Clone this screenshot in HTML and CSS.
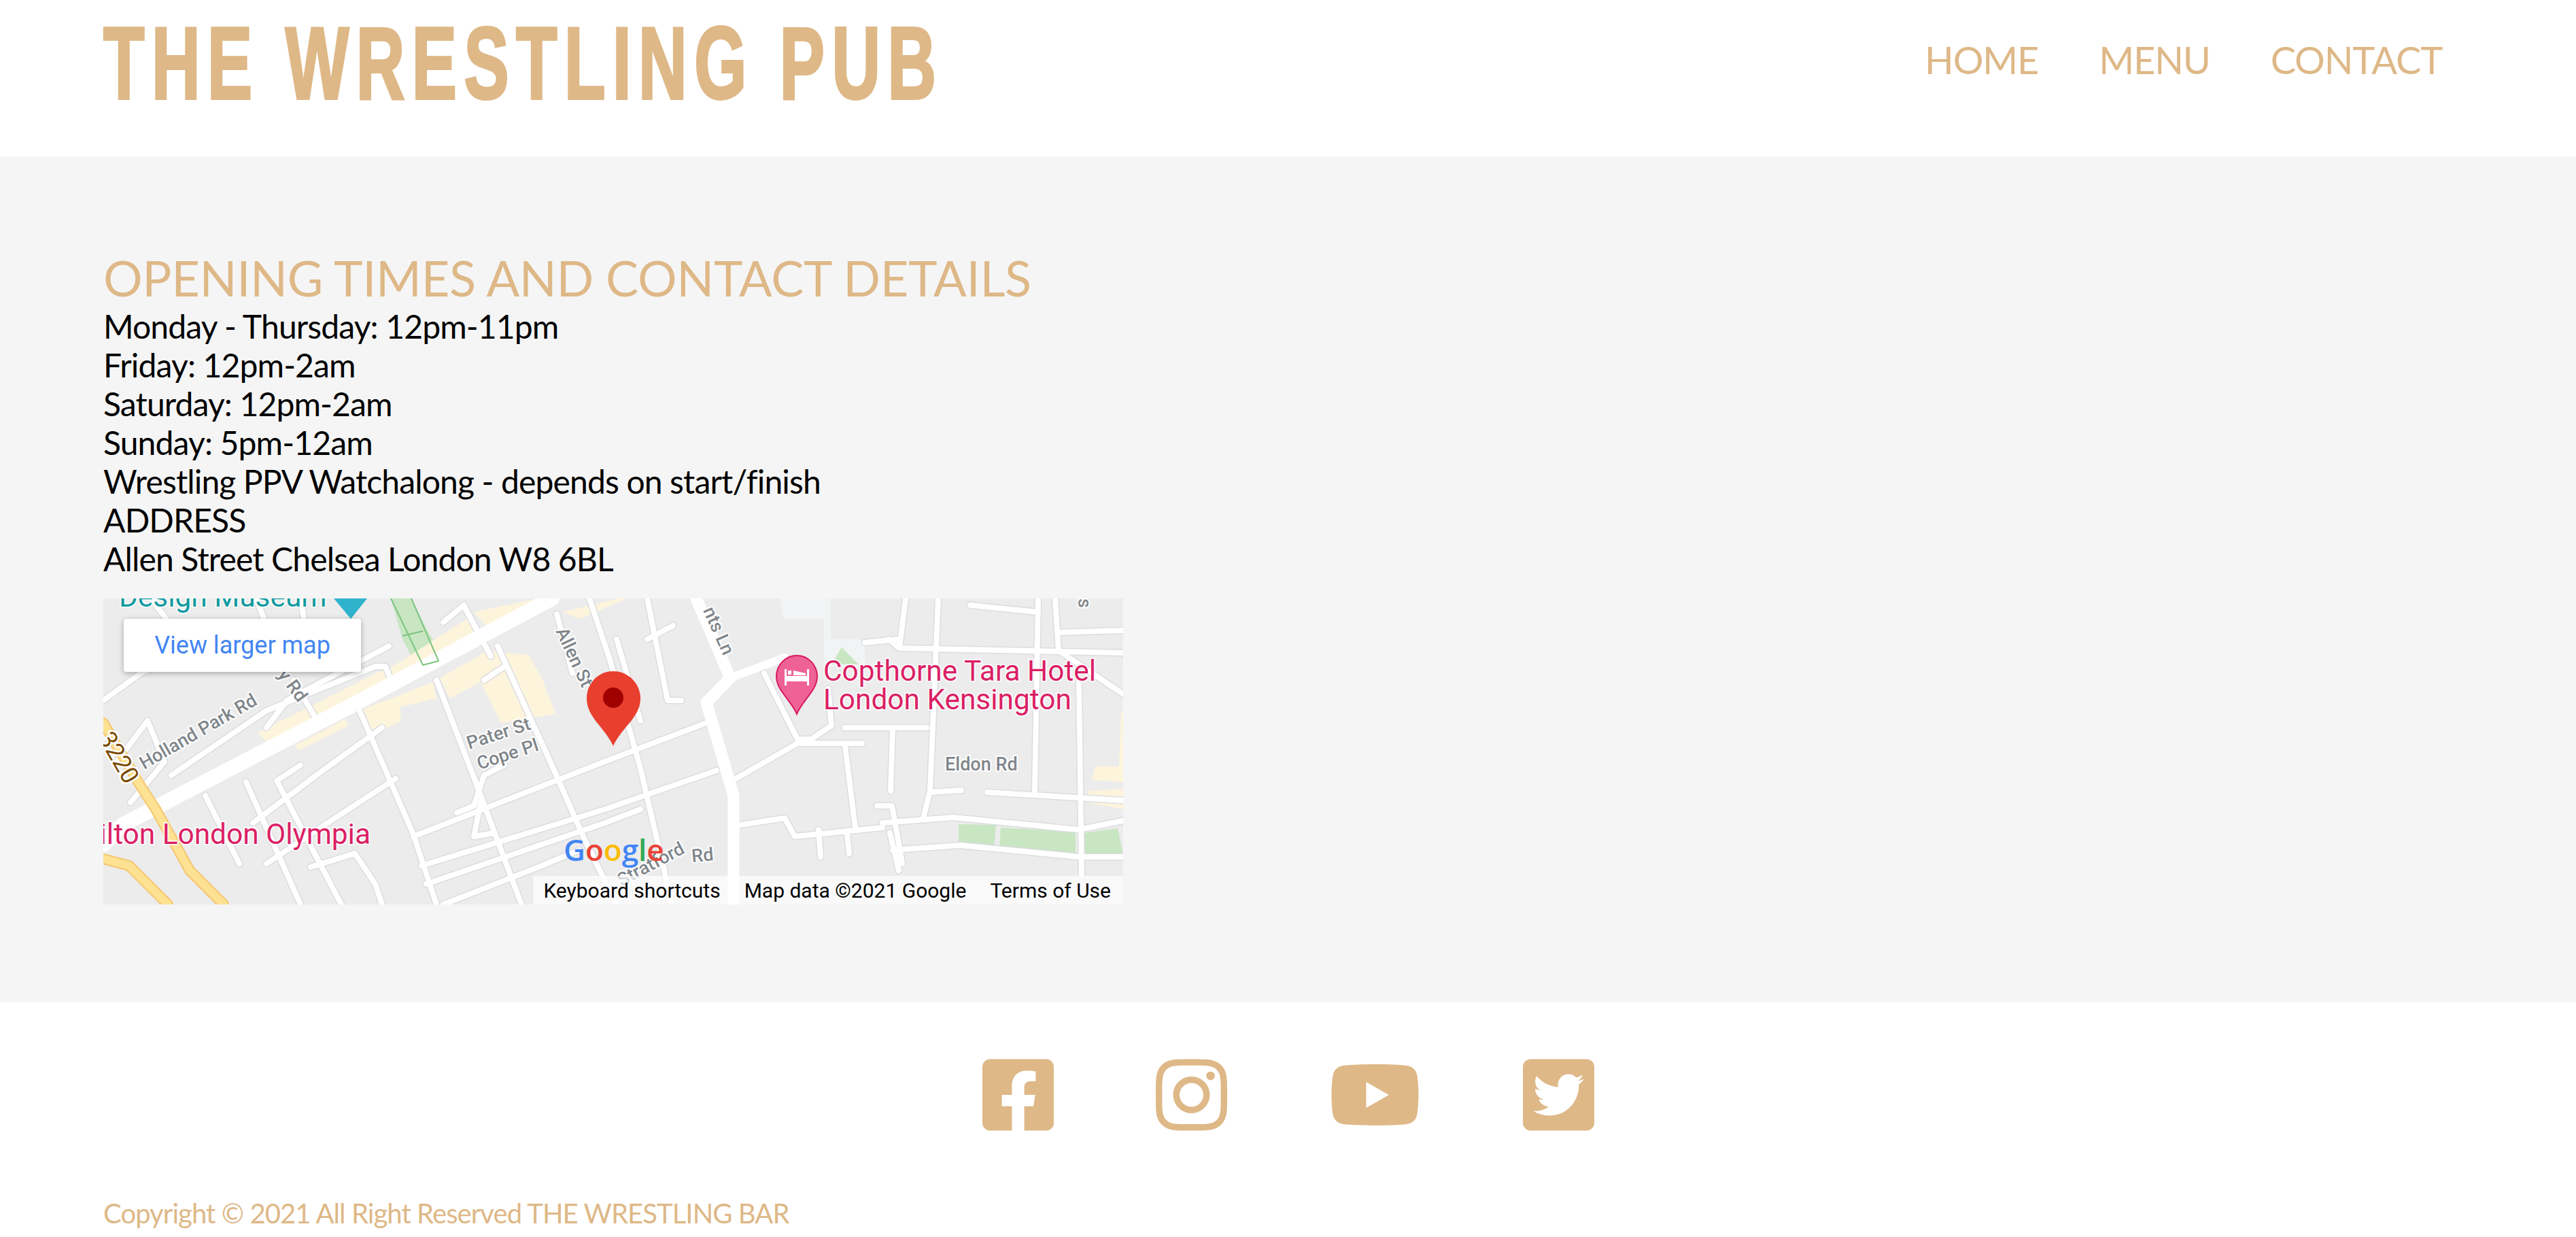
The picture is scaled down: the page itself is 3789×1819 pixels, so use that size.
FILE: index.html
```html
<!doctype html>
<html>
  <head>
    <meta charset="UTF-8" />
    <title>The Wrestling Pub</title>
    <link rel="stylesheet" href="styles.css">
  </head>
  <body>
    <header class="site-header">
      <h1 class="logo">THE WRESTLING PUB</h1>
      <nav class="main-nav">
        <a href="#">HOME</a>
        <a href="#">MENU</a>
        <a href="#">CONTACT</a>
      </nav>
    </header>

    <main class="contact">
      <h2>OPENING TIMES AND CONTACT DETAILS</h2>
      <p>Monday - Thursday: 12pm-11pm</p>
      <p>Friday: 12pm-2am</p>
      <p>Saturday: 12pm-2am</p>
      <p>Sunday: 5pm-12am</p>
      <p>Wrestling PPV Watchalong - depends on start/finish</p>
      <p>ADDRESS</p>
      <p>Allen Street Chelsea London W8 6BL</p>

      <div class="map">
        <svg class="map-canvas" viewBox="0 0 1500 450" width="1500" height="450">
          <defs>
            <g id="minor-roads">
              <path d="M376 163L456 347L490 450" />
              <path d="M490 120L545 263L615 450" />
              <path d="M580 70L665 257L709 357L755 450" />
              <path d="M667 23L690 110" />
              <path d="M715 0L745 90L790 250L825 400L835 450" />
              <path d="M800 0L830 150L850 150" />
              <path d="M800 60L838 40" />
              <path d="M755 60L790 180" />
              <path d="M456 350L745 237L887 183" />
              <path d="M468 393L738 310L902 253" />
              <path d="M475 420L738 330L790 310" />
              <path d="M500 450L640 395L700 370" />
              <path d="M520 315L545 305L560 260L590 245" />
              <path d="M575 345L545 350L555 300" />
              <path d="M560 120L590 100" />
              <path d="M220 330L320 255L410 190" />
              <path d="M240 390L330 330L430 265" />
              <path d="M210 270L290 450" />
              <path d="M150 290L200 390" />
              <path d="M290 245L255 268L350 450" />
              <path d="M305 395L370 375L400 420L410 450" />
              <path d="M0 150L55 110L100 90" />
              <path d="M20 240L65 180L90 240L40 300" />
              <path d="M100 260L240 165L400 100L415 100L425 125" />
              <path d="M240 190L270 150L420 70" />
              <path d="M280 120L320 190" />
              <path d="M70 0L100 40M225 0L240 40M290 0L295 30" />
              <path d="M500 35L530 10M530 10L570 85" />
              <path d="M927 267L1021 213L1116 213" />
              <path d="M1091 217L1106 337" />
              <path d="M972 110L1021 207L1041 207L1071 187L1066 133" />
              <path d="M1091 190L1211 190" />
              <path d="M1161 193L1158 283" />
              <path d="M1171 73L1499 80" />
              <path d="M1155 60L1171 73L1180 0" />
              <path d="M1120 65L1170 60" />
              <path d="M1228 0L1216 283L1206 323" />
              <path d="M1375 0L1370 283" />
              <path d="M1435 123L1439 407" />
              <path d="M1405 50L1499 47" />
              <path d="M1400 0L1405 77" />
              <path d="M1410 80L1499 140" />
              <path d="M1300 285L1499 297" />
              <path d="M1146 330L1250 322L1435 340L1499 327" />
              <path d="M1161 370L1260 363L1435 380L1499 380" />
              <path d="M937 333L1002 323L1017 350L1146 337" />
              <path d="M1138 305L1160 305L1170 360L1175 390" />
              <path d="M1275 10L1375 20" />
              <path d="M1216 285L1262 282" />
              <path d="M1052 340L1055 380M1094 345L1097 375" />
              <path d="M1157 345L1170 400" />
            </g>
          </defs>

          <rect class="land" width="1500" height="450" />
          <path class="building" d="M995 0H1070V60H1120V100H1060V30H1000Z" />
          <path class="park" d="M1086 72L1111 97H1071Z" />
          <path class="park" d="M423 0H453L478 50L485 60L455 88L440 60Z" />
          <path class="park" d="M1258 332L1313 333L1310 365L1258 358Z" />
          <path class="park" d="M1320 337L1430 343L1430 377L1318 367Z" />
          <path class="park" d="M1442 345L1492 338L1500 377L1442 377Z" />

          <path class="shop" d="M227 197L416 103L423 120L242 213Z" />
          <path class="shop" d="M421 103L540 27L555 50L426 120Z" />
          <path class="shop" d="M545 20L640 0L655 0L565 43Z" />
          <path class="shop" d="M381 163L485 123L490 147L436 160L438 180L396 200Z" />
          <path class="shop" d="M495 117L565 77L625 83L645 117L665 170L585 183L555 123L510 147Z" />
          <path class="shop" d="M281 217L356 177L361 187L289 223Z" />
          <path class="shop" d="M675 20L758 0L770 0L700 30Z" />
          <path class="shop" d="M1459 247L1494 247L1497 167L1500 163V270L1454 267Z" />
          <path class="shop" d="M1449 283L1500 280V310L1449 300Z" />

          <use href="#minor-roads" class="road-edge" />
          <use href="#minor-roads" class="road" />

          <path class="road-main" d="M0 362L28 333L366 157L660 0" />
          <path class="road-mid" d="M872 0L922 117L887 153L927 290V450" />
          <path class="road-mid road-mid-thin" d="M922 117L1002 87" />

          <path class="rail" d="M423 0L470 98L493 92L453 0M440 55L470 48" />

          <path class="highway-edge" d="M0 183L53 273L77 310L127 400L177 450" />
          <path class="highway" d="M0 183L53 273L77 310L127 400L177 450" />
          <path class="highway-edge" d="M0 383L38 393L95 450" />
          <path class="highway" d="M0 383L38 393L95 450" />

          <path class="pin-teal" d="M339 0H388L364 30Z" />

          <text class="label" transform="translate(60 252) rotate(-30)">Holland Park Rd</text>
          <text class="label" transform="translate(256 112) rotate(54)">y Rd</text>
          <text class="label" transform="translate(538 222) rotate(-18)">Pater St</text>
          <text class="label" transform="translate(553 252) rotate(-18)">Cope Pl</text>
          <text class="label" transform="translate(665 48) rotate(65)">Allen St</text>
          <text class="label label-end" transform="translate(912 85) rotate(66)">nts Ln</text>
          <text class="label" x="1238" y="253">Eldon Rd</text>
          <text class="label" transform="translate(762 424) rotate(-28)">Stratford</text>
          <text class="label" transform="translate(866 388) rotate(-5)">Rd</text>
          <text class="label" transform="translate(1434 0) rotate(90)">s</text>
          <text class="label-road" transform="translate(-8 205) rotate(60)">3220</text>

          <text class="poi poi-teal" x="23" y="12">Design Museum</text>
          <text class="poi poi-pink" x="393" y="361" text-anchor="end">Hilton London Olympia</text>
          <text class="poi poi-pink" x="1059" y="121">Copthorne Tara Hotel</text>
          <text class="poi poi-pink" x="1059" y="163">London Kensington</text>

          <path class="hotel-pin" d="M1020 84C1003 84 990 98 990 115C990 135 1012 150 1020 170C1028 150 1050 135 1050 115C1050 98 1037 84 1020 84Z" />
          <path class="hotel-bed" d="M1002 104H1005V114H1035V104H1038V128H1035V122H1005V128H1002ZM1007 106H1012V112H1007ZM1015 106L1033 110V113H1015Z" />

          <path class="pin-red" d="M750 107C728 107 711 125 711 147C711 175 738 190 750 217C762 190 790 175 790 147C790 125 772 107 750 107Z" />
          <circle class="pin-red-dot" cx="750" cy="146" r="15" />

          <text class="google" x="677" y="386"><tspan class="g-blue">G</tspan><tspan class="g-red">o</tspan><tspan class="g-yellow">o</tspan><tspan class="g-blue">g</tspan><tspan class="g-green">l</tspan><tspan class="g-red">e</tspan></text>
        </svg>

        <a class="map-larger" href="#">View larger map</a>
        <div class="map-terms">
          <span>Keyboard shortcuts</span>
          <span>Map data ©2021 Google</span>
          <span>Terms of Use</span>
        </div>
      </div>
    </main>

    <footer class="site-footer">
      <div class="socials">
        <a href="#">
          <svg class="icon" viewBox="0 0 448 512"><path d="M400 32H48A48 48 0 0 0 0 80v352a48 48 0 0 0 48 48h137.25V327.69h-63V256h63v-54.64c0-62.15 37-96.48 93.67-96.48 27.14 0 55.52 4.84 55.52 4.84v61h-31.27c-30.81 0-40.42 19.12-40.42 38.73V256h68.78l-11 71.69h-57.78V480H400a48 48 0 0 0 48-48V80a48 48 0 0 0-48-48z" /></svg>
        </a>
        <a href="#">
          <svg class="icon" viewBox="0 0 448 512"><path d="M224.1 141c-63.6 0-114.9 51.3-114.9 114.9s51.3 114.9 114.9 114.9S339 319.5 339 255.9 287.7 141 224.1 141zm0 189.6c-41.1 0-74.7-33.5-74.7-74.7s33.5-74.7 74.7-74.7 74.7 33.5 74.7 74.7-33.6 74.7-74.7 74.7zm146.4-194.3c0 14.9-12 26.8-26.8 26.8-14.9 0-26.8-12-26.8-26.8s12-26.8 26.8-26.8 26.8 12 26.8 26.8zm76.1 27.2c-1.7-35.9-9.9-67.7-36.2-93.9-26.2-26.2-58-34.4-93.9-36.2-37-2.1-147.9-2.1-184.9 0-35.8 1.7-67.6 9.9-93.9 36.1s-34.4 58-36.2 93.9c-2.1 37-2.1 147.9 0 184.9 1.7 35.9 9.9 67.7 36.2 93.9s58 34.4 93.9 36.2c37 2.1 147.9 2.1 184.9 0 35.9-1.7 67.7-9.9 93.9-36.2 26.2-26.2 34.4-58 36.2-93.9 2.1-37 2.1-147.8 0-184.8zM398.8 388c-7.8 19.6-22.9 34.7-42.6 42.6-29.5 11.7-99.5 9-132.1 9s-102.7 2.6-132.1-9c-19.6-7.8-34.7-22.9-42.6-42.6-11.7-29.5-9-99.5-9-132.1s-2.6-102.7 9-132.1c7.8-19.6 22.9-34.7 42.6-42.6 29.5-11.7 99.5-9 132.1-9s102.7-2.6 132.1 9c19.6 7.8 34.7 22.9 42.6 42.6 11.7 29.5 9 99.5 9 132.1s2.7 102.7-9 132.1z" /></svg>
        </a>
        <a href="#">
          <svg class="icon" viewBox="0 0 576 512"><path d="M549.655 124.083c-6.281-23.65-24.787-42.276-48.284-48.597C458.781 64 288 64 288 64S117.22 64 74.629 75.486c-23.497 6.322-42.003 24.947-48.284 48.597-11.412 42.867-11.412 132.305-11.412 132.305s0 89.438 11.412 132.305c6.281 23.65 24.787 41.5 48.284 47.821C117.22 448 288 448 288 448s170.78 0 213.371-11.486c23.497-6.321 42.003-24.171 48.284-47.821 11.412-42.867 11.412-132.305 11.412-132.305s0-89.438-11.412-132.305zm-317.51 213.508V175.185l142.739 81.205-142.739 81.201z" /></svg>
        </a>
        <a href="#">
          <svg class="icon" viewBox="0 0 448 512"><path d="M400 32H48C21.5 32 0 53.5 0 80v352c0 26.5 21.5 48 48 48h352c26.5 0 48-21.5 48-48V80c0-26.5-21.5-48-48-48zm-48.9 158.8c.2 2.8.2 5.7.2 8.5 0 86.7-66 186.6-186.6 186.6-37.2 0-71.7-10.8-100.7-29.4 5.3.6 10.4.8 15.8.8 30.7 0 58.9-10.4 81.4-28-28.8-.6-53-19.5-61.3-45.5 10.1 1.5 19.2 1.5 29.6-1.2-30-6.1-52.5-32.5-52.5-64.4v-.8c8.7 4.9 18.9 7.9 29.6 8.3a65.447 65.447 0 0 1-29.2-54.6c0-12.2 3.2-23.4 8.9-33.1 32.3 39.8 80.8 65.8 135.2 68.6-9.3-44.5 24-80.6 64-80.6 18.9 0 35.9 7.9 47.9 20.7 14.8-2.8 29-8.3 41.6-15.8-4.9 15.2-15.2 28-28.9 36.1 13.3-1.4 26.2-5.1 38.1-10.3-9 13.2-20.3 24.9-33.2 34.1z" /></svg>
        </a>
      </div>
      <p class="copyright">Copyright © 2021 All Right Reserved THE WRESTLING BAR</p>
    </footer>
  </body>
</html>
```

FILE: styles.css
```css
:root {
  --gold: #deb887;
  --panel: #f5f5f5;
}

* {
  margin: 0;
  padding: 0;
  box-sizing: border-box;
}

body {
  font-family: Lato, 'Liberation Sans', sans-serif;
  font-weight: 400;
  background-color: #fff;
  color: #000;
}

a {
  color: inherit;
  text-decoration: none;
}

/* header */

.site-header {
  display: flex;
  align-items: center;
  justify-content: space-between;
  height: 230px;
  padding: 0 197px 0 152px;
}

.logo {
  font-family: 'Liberation Sans', sans-serif;
  font-size: 150px;
  font-weight: 700;
  line-height: 180px;
  letter-spacing: 16px;
  color: var(--gold);
  -webkit-text-stroke: 4px var(--gold);
  white-space: nowrap;
  margin-bottom: 45px;
  transform: scaleX(0.66);
  transform-origin: left center;
}

.main-nav {
  display: flex;
  gap: 89px;
  font-size: 56px;
  letter-spacing: -1.2px;
  color: var(--gold);
  padding-bottom: 56px;
}

/* opening times */

.contact {
  background-color: var(--panel);
  padding: 135px 152px 144px;
  font-size: 48px;
  line-height: 57px;
  letter-spacing: -0.85px;
}

.contact h2 {
  font-size: 72px;
  font-weight: 400;
  line-height: 86px;
  letter-spacing: -0.3px;
  color: var(--gold);
}

.map {
  position: relative;
  width: 1500px;
  height: 450px;
  margin-top: 30px;
  overflow: hidden;
  font-family: Roboto, 'Liberation Sans', sans-serif;
  font-weight: 400;
  letter-spacing: 0;
}

.map-canvas {
  display: block;
}

.map-larger {
  position: absolute;
  top: 30px;
  left: 30px;
  width: 349px;
  height: 78px;
  background-color: #fff;
  border-radius: 4px;
  box-shadow: 0 2px 8px rgba(0, 0, 0, 0.3);
  color: #4285f4;
  font-size: 36px;
  line-height: 78px;
  text-align: center;
}

.map-terms {
  position: absolute;
  right: 0;
  bottom: 0;
  display: flex;
  gap: 35px;
  height: 42px;
  padding: 0 18px 0 15px;
  background-color: rgba(255, 255, 255, 0.7);
  color: #000;
  font-size: 30px;
  line-height: 44px;
  white-space: nowrap;
}

/* map drawing */

.land { fill: #ececec; }
.building { fill: #f1f3f4; }
.park { fill: #c8e6c2; }
.shop { fill: #fdf4dc; }

.road,
.road-edge,
.road-main,
.road-mid,
.highway,
.highway-edge,
.rail {
  fill: none;
  stroke-linecap: round;
  stroke-linejoin: round;
}

.road { stroke: #fff; stroke-width: 8; }
.road-edge { stroke: #dcdde1; stroke-width: 11; }
.road-main { stroke: #fff; stroke-width: 22; }
.road-mid { stroke: #fff; stroke-width: 17; }
.road-mid-thin { stroke-width: 12; }
.highway { stroke: #fde293; stroke-width: 12; }
.highway-edge { stroke: #f6c66f; stroke-width: 16; }
.rail { stroke: #7cc47f; stroke-width: 2; stroke-linecap: butt; }

.label,
.label-road,
.poi {
  font-family: Roboto, 'Liberation Sans', sans-serif;
  paint-order: stroke;
  stroke: #fff;
  stroke-linejoin: round;
}

.label {
  font-size: 27px;
  font-weight: 500;
  fill: #80868b;
  stroke-width: 4;
}

.label-end { text-anchor: end; }

.label-road {
  font-size: 36px;
  fill: #7b4a00;
  stroke-width: 5;
}

.poi {
  font-size: 42.4px;
  stroke-width: 4;
  stroke-opacity: 0.8;
}

.poi-teal { fill: #129aa0; }
.poi-pink { fill: #db1f65; }

.pin-teal { fill: #2fb3cd; }
.hotel-pin { fill: #ee6296; stroke: #d81b60; stroke-width: 2; }
.hotel-bed { fill: #fff; }
.pin-red { fill: #e83f2e; }
.pin-red-dot { fill: #a00000; }

.google {
  font-family: 'Open Sans', Roboto, sans-serif;
  font-size: 44px;
  font-weight: 600;
}

.g-blue { fill: #4285f4; }
.g-red { fill: #ea4335; }
.g-yellow { fill: #fbbc05; }
.g-green { fill: #34a853; }

/* footer */

.site-footer {
  padding: 76px 152px 0;
}

.socials {
  display: flex;
  justify-content: center;
  gap: 150px;
  color: var(--gold);
}

.socials a {
  display: block;
  height: 120px;
}

.icon {
  display: block;
  height: 120px;
  fill: currentColor;
}

.copyright {
  margin-top: 90px;
  font-size: 40px;
  line-height: 48px;
  letter-spacing: -0.93px;
  color: var(--gold);
}
```
